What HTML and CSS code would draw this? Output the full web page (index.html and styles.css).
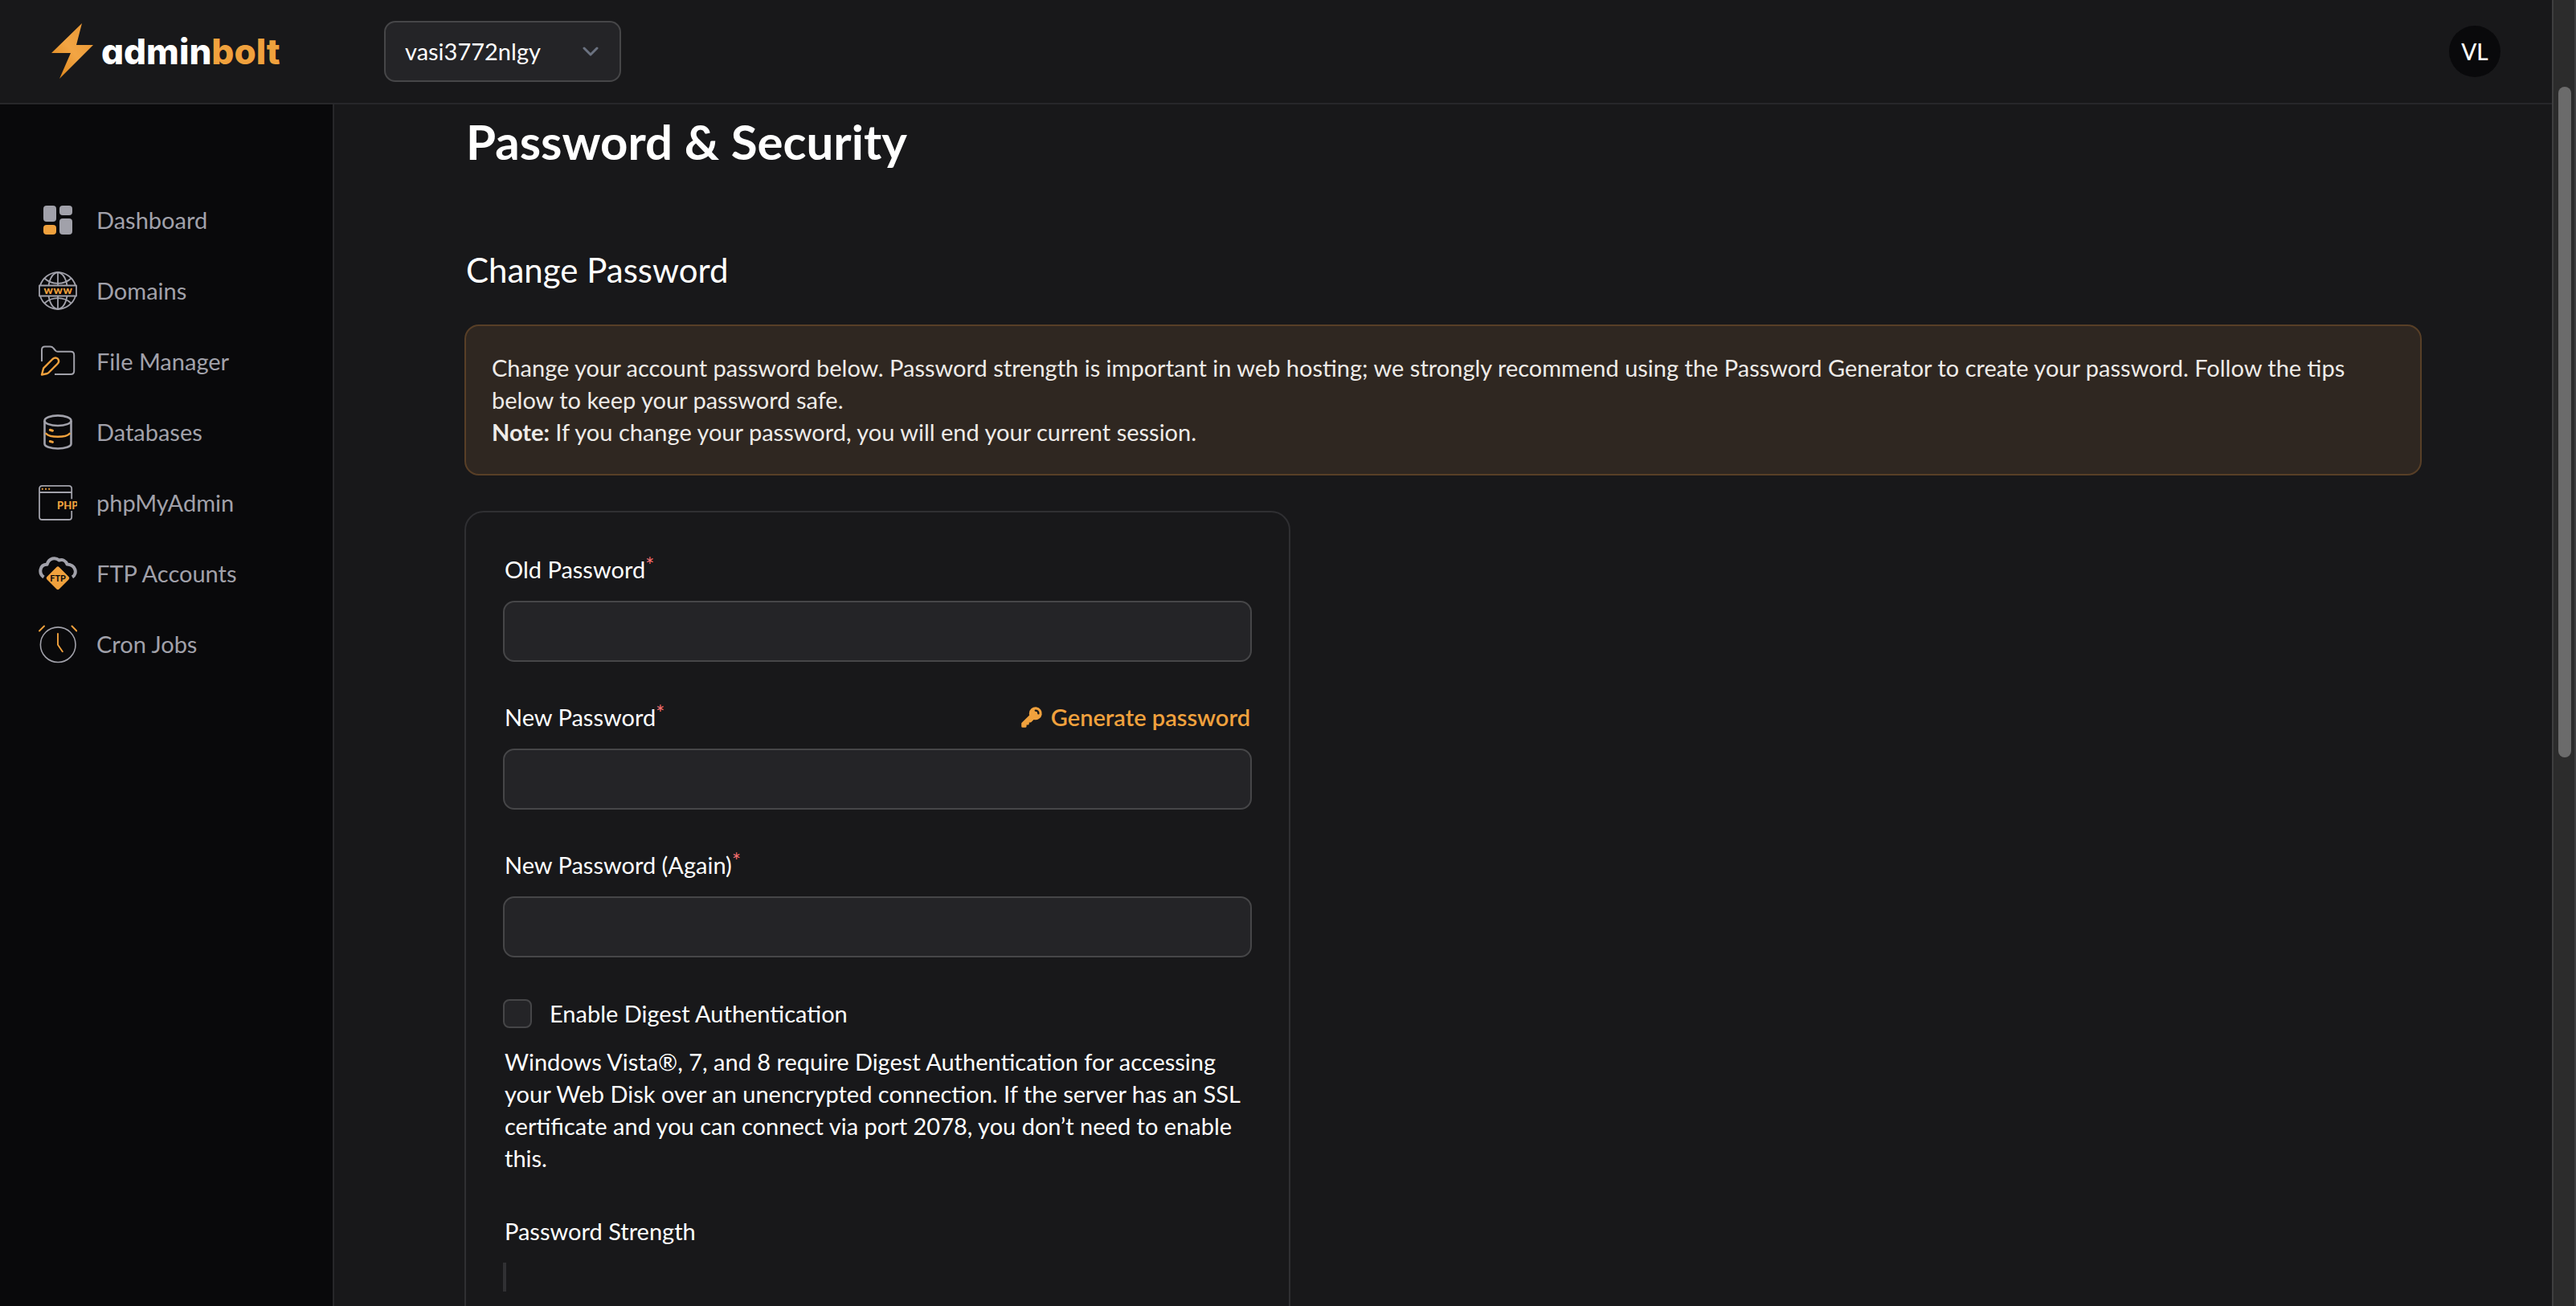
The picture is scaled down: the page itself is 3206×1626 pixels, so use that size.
FILE: index.html
```html
<!DOCTYPE html>
<html lang="en">
<head>
<meta charset="utf-8">
<title>Password &amp; Security - adminbolt</title>
<meta name="viewport" content="width=device-width, initial-scale=1">
<link rel="stylesheet" href="styles.css">
</head>
<body>
<div class="app">
  <header class="topbar">
    <a class="logo" href="#" aria-label="adminbolt">
      <svg class="logo-mark" viewBox="0 0 52 70" aria-hidden="true">
        <defs>
          <linearGradient id="bolt" x1="0" y1="1" x2="1" y2="0">
            <stop offset="0" stop-color="#d97f12"/>
            <stop offset=".5" stop-color="#f2a544"/>
            <stop offset="1" stop-color="#e8942f"/>
          </linearGradient>
        </defs>
        <path fill="url(#bolt)" d="M38 0 31 27H52L10 69 24 37H0Z"/>
      </svg>
      <span class="logo-text">admin<span class="logo-accent">bolt</span></span>
    </a>
    <div class="account">
      <select class="account-select" aria-label="Account">
        <option>vasi3772nlgy</option>
      </select>
      <svg class="account-chevron" viewBox="0 0 20 12" aria-hidden="true"><path d="M2 2l8 8 8-8"/></svg>
    </div>
    <button class="avatar" type="button">VL</button>
  </header>

  <div class="body">
    <nav class="sidebar" aria-label="Main">
      <a class="nav-item" href="#">
        <svg class="nav-icon" viewBox="0 0 48 48" aria-hidden="true">
          <g class="fill-gray"><rect x="6" y="6" width="16" height="20" rx="4"/><rect x="26" y="6" width="16" height="12" rx="4"/><rect x="26" y="22" width="16" height="20" rx="4"/></g>
          <rect class="fill-orange" x="6" y="30" width="16" height="12" rx="4"/>
        </svg>
        Dashboard
      </a>
      <a class="nav-item" href="#">
        <svg class="nav-icon" viewBox="0 0 48 48" aria-hidden="true">
          <g class="line" stroke-width="1.8">
            <path d="M2 17.5A23 23 0 0 1 46 17.5M2 30.5A23 23 0 0 0 46 30.5"/>
            <path d="M24 1V17.5M24 30.5V47"/>
            <path d="M12.5 17.5C14 9 18 2 24 1C30 2 34 9 35.500 17.500M12.500 30.500C14 39 18 46 24 47C30 46 34 39 35.500 30.500"/>
            <path d="M7.500 8.500C16 17 32 17 40.500 8.500M7.500 39.500C16 31 32 31 40.500 39.500"/>
            <rect x="1" y="17.500" width="46" height="13"/>
          </g>
          <text class="glyph" x="6.500 18.500 30.500" y="28" font-size="14">www</text>
        </svg>
        Domains
      </a>
      <a class="nav-item" href="#">
        <svg class="nav-icon" viewBox="0 0 48 48" aria-hidden="true">
          <path class="line" stroke-width="2" d="M4 24V9.500Q4 5.500 8 5.500H14.500Q17 5.500 18.500 7.500L21 10.500Q22 11.800 24 11.800H40Q44.200 11.800 44.200 16V36Q44.200 40 40 40H20"/>
          <path class="line-orange" stroke-width="2.400" d="M4 40.500L6.200 32.300L17.500 21Q21 18 24 20.700Q26.500 24 23.500 27L12.500 38Q11.500 39 10 39.300Z"/>
        </svg>
        File Manager
      </a>
      <a class="nav-item" href="#">
        <svg class="nav-icon" viewBox="0 0 48 48" aria-hidden="true">
          <g class="line" stroke-width="2.600"><ellipse cx="24" cy="9.700" rx="16.500" ry="6.300"/><path d="M7.500 10V38.500C7.500 42 15 44.500 24 44.500S40.500 42 40.500 38.500V10"/></g>
          <path class="line-orange" stroke-width="2.600" d="M9.500 26C14 31 34 31 38.500 26"/>
          <path class="line-orange" stroke-width="3" d="M14.300 21.300L17.500 22.200M14.300 35.500L17.500 36.400"/>
        </svg>
        Databases
      </a>
      <a class="nav-item" href="#">
        <svg class="nav-icon" viewBox="0 0 48 48" aria-hidden="true">
          <path class="line" stroke-width="1.800" d="M41.200 19.300V6.500Q41.200 2.900 37.600 2.900H4.500Q1 2.900 1 6.500V41.400Q1 45 4.500 45H37.600Q41.200 45 41.200 41.400V34M1 11H41"/>
          <g class="fill-orange"><circle cx="4.800" cy="6.800" r="1.100"/><circle cx="9" cy="6.800" r="1.100"/><circle cx="13.200" cy="6.800" r="1.100"/></g>
          <text class="glyph" x="23" y="32" font-size="13">PHP</text>
        </svg>
        phpMyAdmin
      </a>
      <a class="nav-item" href="#">
        <svg class="nav-icon" viewBox="0 0 48 48" aria-hidden="true">
          <path class="line" stroke-width="4" d="M6.500 28.500C0 24 1 13 10.500 12.800C13 4.500 21 3.500 25.500 7.500C30 6 34 8.500 35.500 12.500C46 13 49 24 42 28.500"/>
          <rect class="fill-orange" x="13.200" y="18.900" width="21.600" height="21.600" rx="2.500" transform="rotate(45 24 29.700)"/>
          <text class="glyph-dark" x="24" y="33.500" font-size="11" text-anchor="middle">FTP</text>
        </svg>
        FTP Accounts
      </a>
      <a class="nav-item" href="#">
        <svg class="nav-icon" viewBox="0 0 48 48" aria-hidden="true">
          <circle class="line" stroke-width="1.600" cx="24.200" cy="24.700" r="21.800"/>
          <path class="line-orange" stroke-width="1.900" d="M24 11V24.700L29.800 33.300M1 7.500L7 1.500M41.500 1.500L47.300 7.500"/>
        </svg>
        Cron Jobs
      </a>
    </nav>

    <main class="content">
      <h1 class="page-title">Password &amp; Security</h1>
      <h2 class="section-title">Change Password</h2>
      <div class="notice">
        <p>Change your account password below. Password strength is important in web hosting; we strongly recommend using the Password Generator to create your password. Follow the tips below to keep your password safe.</p>
        <p><strong>Note:</strong> If you change your password, you will end your current session.</p>
      </div>

      <form class="card">
        <div class="field">
          <label class="label" for="old">Old Password<span class="required">*</span></label>
          <input class="input" id="old" type="password">
        </div>
        <div class="field">
          <div class="label-row">
            <label class="label" for="new">New Password<span class="required">*</span></label>
            <button class="generate" type="button">
              <svg class="key" viewBox="0 0 20 20" aria-hidden="true"><path fill-rule="evenodd" d="M8 7a5 5 0 1 1 3.610 4.804l-1.903 1.903A1 1 0 0 1 9 14H8v1a1 1 0 0 1-1 1H6v1a1 1 0 0 1-1 1H3a1 1 0 0 1-1-1v-2a1 1 0 0 1 .293-.707L8.196 8.390A5.002 5.002 0 0 1 8 7Zm5-3a.75.75 0 0 0 0 1.500A1.500 1.500 0 0 1 14.500 7 .75.75 0 0 0 16 7a3 3 0 0 0-3-3Z"/></svg>
              Generate password
            </button>
          </div>
          <input class="input" id="new" type="password">
        </div>
        <div class="field">
          <label class="label" for="again">New Password (Again)<span class="required">*</span></label>
          <input class="input" id="again" type="password">
        </div>
        <div class="digest">
          <label class="check-row"><input class="check" type="checkbox">Enable Digest Authentication</label>
          <p class="hint">Windows Vista®, 7, and 8 require Digest Authentication for accessing your Web Disk over an unencrypted connection. If the server has an SSL certificate and you can connect via port 2078, you don’t need to enable this.</p>
        </div>
        <div class="field">
          <span class="label" id="strength">Password Strength</span>
          <div class="meter" role="meter" aria-labelledby="strength" aria-valuenow="0" aria-valuemin="0" aria-valuemax="100"></div>
        </div>
      </form>
    </main>
  </div>
</div>
<div class="scrollbar" aria-hidden="true"><div class="thumb"></div></div>
</body>
</html>
```

FILE: styles.css
```css
* {
  box-sizing: border-box;
}

:root {
  --bg: #18181a;
  --bg-deep: #09090b;
  --bg-field: #242427;
  --line: #27272a;
  --line-card: #2f2f32;
  --line-field: #464648;
  --gray: #a1a1aa;
  --orange: #f0a13d;
}

body {
  display: flex;
  height: 100vh;
  margin: 0;
  overflow: hidden;
  background: var(--bg);
  color: #fff;
  font-family: Lato, "Open Sans", sans-serif;
  font-size: 29px;
  line-height: 40px;
}

h1, h2, p {
  margin: 0;
}

button, input, select {
  margin: 0;
  color: inherit;
  font: inherit;
}

a {
  color: inherit;
  text-decoration: none;
}

.app {
  display: flex;
  flex: 1;
  flex-direction: column;
  min-width: 0;
}

/* Top bar */
.topbar {
  display: flex;
  flex: none;
  align-items: center;
  height: 130px;
  padding: 0 64px;
  border-bottom: 2px solid var(--line);
}

.logo {
  display: flex;
  align-items: center;
  gap: 10px;
  width: 414px;
}

.logo-mark {
  width: 52px;
  height: 70px;
}

.logo-text {
  font-family: Inter, Lato, sans-serif;
  font-feature-settings: "cv11";
  font-size: 44px;
  font-weight: 800;
  line-height: 56px;
}

.logo-accent {
  color: var(--orange);
}

.account {
  position: relative;
  width: 295px;
}

.account-select {
  display: block;
  width: 100%;
  height: 76px;
  padding: 0 60px 0 24px;
  appearance: none;
  border: 2px solid var(--line-field);
  border-radius: 14px;
  background: var(--bg-field);
}

.account-chevron {
  position: absolute;
  top: 32px;
  right: 28px;
  width: 20px;
  height: 12px;
  fill: none;
  stroke: #6b7280;
  stroke-width: 3;
  stroke-linecap: round;
  stroke-linejoin: round;
  pointer-events: none;
}

.avatar {
  width: 64px;
  height: 64px;
  margin-left: auto;
  padding: 0;
  border: 0;
  border-radius: 50%;
  background: var(--bg-deep);
  font-size: 28px;
  font-weight: 500;
}

/* Sidebar */
.body {
  display: flex;
  flex: 1;
  min-height: 0;
}

.sidebar {
  display: flex;
  flex: none;
  flex-direction: column;
  width: 416px;
  padding: 100px 48px;
  border-right: 2px solid var(--line);
  background: var(--bg-deep);
  color: var(--gray);
}

.nav-item {
  display: flex;
  align-items: center;
  gap: 24px;
  height: 88px;
}

.nav-icon {
  flex: none;
  width: 48px;
  height: 48px;
}

.fill-gray {
  fill: var(--gray);
}

.fill-orange {
  fill: var(--orange);
}

.line, .line-orange {
  fill: none;
  stroke: var(--gray);
  stroke-linejoin: round;
}

.line-orange {
  stroke: var(--orange);
  stroke-linecap: round;
}

.glyph, .glyph-dark {
  fill: var(--orange);
  font-weight: 900;
}

.glyph-dark {
  fill: var(--bg-deep);
  font-weight: 700;
}

/* Content */
.content {
  flex: 1;
  min-width: 0;
  padding: 10px 162px 0;
  overflow: hidden;
}

.page-title {
  padding-left: 2px;
  font-size: 60px;
  font-weight: 700;
  line-height: 72px;
}

.section-title {
  margin: 100px 0 44px;
  padding-left: 2px;
  font-size: 42px;
  font-weight: 400;
  line-height: 48px;
}

.notice {
  padding: 32px;
  border: 2px solid #583f27;
  border-radius: 18px;
  background: #2f2721;
  color: #eeebe8;
}

.card {
  display: flex;
  flex-direction: column;
  gap: 44px;
  width: 100%;
  max-width: 1028px;
  margin-top: 44px;
  padding: 46px;
  border: 2px solid var(--line-card);
  border-radius: 24px;
}

.field {
  display: flex;
  flex-direction: column;
  gap: 14px;
}

.label {
  padding-left: 2px;
  line-height: 50px;
}

.label-row {
  display: flex;
  justify-content: space-between;
}

.required {
  color: #f87171;
  font-size: 26px;
  line-height: 0;
  vertical-align: 6px;
}

.input {
  width: 100%;
  height: 76px;
  padding: 0 24px;
  border: 2px solid var(--line-field);
  border-radius: 14px;
  background: var(--bg-field);
}

.generate {
  display: flex;
  align-items: center;
  gap: 8px;
  padding: 0 2px 0 0;
  border: 0;
  background: none;
  color: var(--orange);
  font-weight: 600;
}

.key {
  width: 32px;
  height: 32px;
  fill: currentColor;
}

.check-row {
  display: flex;
  align-items: center;
  gap: 22px;
  height: 52px;
  margin-bottom: 14px;
}

.check {
  width: 36px;
  height: 36px;
  appearance: none;
  border: 2px solid var(--line-field);
  border-radius: 8px;
  background: var(--bg-field);
}

.hint {
  padding: 0 0 2px 2px;
}

.meter {
  height: 36px;
  border-left: 4px solid #303033;
}

/* Page scrollbar */
.scrollbar {
  flex: none;
  width: 30px;
  padding: 108px 4px 0 6px;
  border: solid #3e3e3f;
  border-width: 0 2px;
  background: #2c2c2c;
}

.thumb {
  height: 55%;
  border-radius: 8px;
  background: #6b6b6b;
}
```
